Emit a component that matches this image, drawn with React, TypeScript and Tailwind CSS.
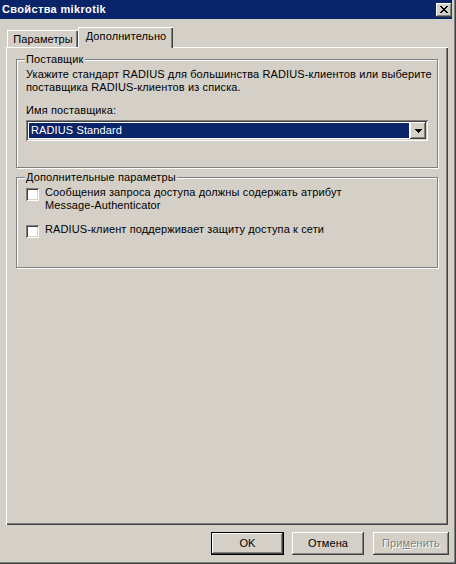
import type { ReactNode } from 'react'

const raised = 'shadow-[inset_-1px_-1px_0_#404040,inset_1px_1px_0_#ffffff,inset_-2px_-2px_0_#808080]'
const sunken = 'shadow-[inset_1px_1px_0_#808080,inset_-1px_-1px_0_#ffffff,inset_2px_2px_0_#404040,inset_-2px_-2px_0_#d4d0c8]'

const closeGlyph = [
  'XX....XX',
  '.XX..XX.',
  '..XXXX..',
  '...XX...',
  '..XXXX..',
  '.XX..XX.',
  'XX....XX',
]

function CloseIcon() {
  return (
    <svg width="8" height="7" viewBox="0 0 8 7" shapeRendering="crispEdges">
      {closeGlyph.map((row, y) =>
        row.split('').map((c, x) =>
          c === 'X' ? <rect key={`${x}-${y}`} x={x} y={y} width="1" height="1" fill="#000" /> : null
        )
      )}
    </svg>
  )
}

function GroupBox({ title, className, children }: { title: string; className?: string; children: ReactNode }) {
  return (
    <div className={`relative border border-[#808080] shadow-[1px_1px_0_#ffffff,inset_1px_1px_0_#ffffff] ${className ?? ''}`}>
      <span className="absolute -top-[7px] left-[8px] bg-[#d4d0c8] px-[1px] leading-[13px]">{title}</span>
      {children}
    </div>
  )
}

function Checkbox() {
  return <div className={`mt-[2px] w-[13px] h-[13px] shrink-0 bg-white ${sunken}`} />
}

export default function App() {
  return (
    <div className="w-[456px] h-[564px] bg-[#d4d0c8] font-['Liberation_Sans',Arial,sans-serif] text-[11px] leading-[13px] tracking-[0.12px] text-black overflow-hidden pr-[4px] pb-[4px] shadow-[inset_-1px_-1px_0_#404040,inset_-2px_-2px_0_#808080]">
      <div className="flex flex-col h-full">
        {/* title bar */}
        <div className="h-[19px] bg-[#0a246a] flex items-center justify-between pl-[2px]">
          <span className="text-white font-bold tracking-[0.35px]">Свойства mikrotik</span>
          <div className={`w-[16px] h-[14px] bg-[#d4d0c8] flex items-center justify-center ${raised}`}>
            <CloseIcon />
          </div>
        </div>

        {/* tabs */}
        <div className="mt-[8px] h-[20px] flex items-end pl-[7px]">
          <div className="h-[17px] w-[71px] border-l border-t border-white pt-[2px] text-center shadow-[inset_-1px_0_0_#404040,inset_-2px_0_0_#808080]">
            Параметры
          </div>
          <div className="relative z-10 h-[21px] w-[95px] -mb-[1px] bg-[#d4d0c8] border-l border-t border-white pt-[2px] text-center shadow-[inset_-1px_0_0_#404040,inset_-2px_0_0_#808080]">
            Дополнительно
          </div>
        </div>

        {/* tab panel */}
        <div className="ml-[6px] w-[442px] h-[478px] border-l border-t border-white shadow-[inset_-1px_-1px_0_#404040,inset_-2px_-2px_0_#808080] pt-[11px] pl-[9px]">
          <GroupBox title="Поставщик" className="w-[422px] pt-[8px] pl-[9px] pb-[26px]">
            <p>Укажите стандарт RADIUS для большинства RADIUS-клиентов или выберите</p>
            <p>поставщика RADIUS-клиентов из списка.</p>
            <p className="mt-[10px]">Имя поставщика:</p>
            <div className={`mt-[3px] w-[402px] h-[21px] bg-white p-[2px] flex ${sunken}`}>
              <div className="flex-1 p-[1px]">
                <div className="h-full bg-[#0a246a] text-white pl-[2px] flex items-center">RADIUS Standard</div>
              </div>
              <div className={`w-[16px] h-[17px] bg-[#d4d0c8] flex items-center justify-center ${raised}`}>
                <svg width="7" height="4" viewBox="0 0 7 4" shapeRendering="crispEdges">
                  <path d="M0 0h7v1h-1v1h-1v1h-1v1h-1v-1h-1v-1h-1v-1h-1z" fill="#000" />
                </svg>
              </div>
            </div>
          </GroupBox>

          <GroupBox title="Дополнительные параметры" className="mt-[9px] w-[422px] pt-[8px] pl-[9px] pb-[29px]">
            <div className="flex">
              <Checkbox />
              <div className="ml-[6px]">
                <p>Сообщения запроса доступа должны содержать атрибут</p>
                <p>Message-Authenticator</p>
              </div>
            </div>
            <div className="flex mt-[11px]">
              <Checkbox />
              <p className="ml-[6px]">RADIUS-клиент поддерживает защиту доступа к сети</p>
            </div>
          </GroupBox>
        </div>

        {/* buttons */}
        <div className="mt-[7px] flex pl-[211px]">
          <div className="w-[73px] h-[23px] border border-black">
            <div className={`h-full flex items-center justify-center ${raised}`}>OK</div>
          </div>
          <div className={`ml-[8px] w-[72px] h-[23px] flex items-center justify-center ${raised}`}>Отмена</div>
          <div className={`ml-[9px] w-[76px] h-[23px] flex items-center justify-center text-[#808080] [text-shadow:1px_1px_0_#ffffff] ${raised}`}>
            <span>
              При<span className="underline">м</span>енить
            </span>
          </div>
        </div>
      </div>
    </div>
  )
}
